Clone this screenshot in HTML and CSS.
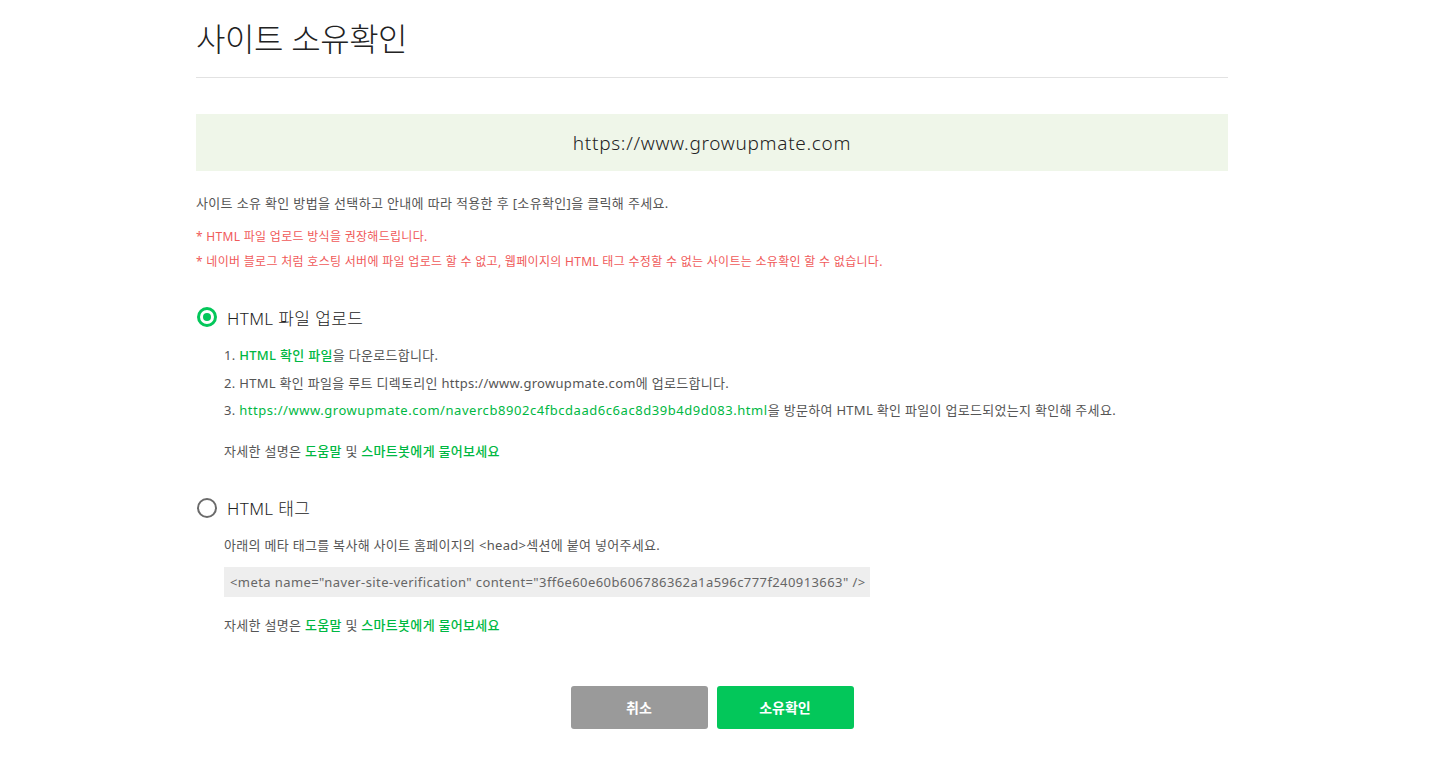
FILE: index.html
```html
<!DOCTYPE html>
<html lang="ko">
<head>
<meta charset="utf-8">
<title>사이트 소유확인</title>
<link rel="stylesheet" href="styles.css">
</head>
<body>
<div class="page">
  <h1 class="title">사이트 소유확인</h1>
  <div class="site-box">https://www.growupmate.com</div>
  <p class="desc">사이트 소유 확인 방법을 선택하고 안내에 따라 적용한 후 [소유확인]을 클릭해 주세요.</p>
  <p class="warn first">* HTML 파일 업로드 방식을 권장해드립니다.</p>
  <p class="warn">* 네이버 블로그 처럼 호스팅 서버에 파일 업로드 할 수 없고, 웹페이지의 HTML 태그 수정할 수 없는 사이트는 소유확인 할 수 없습니다.</p>

  <div class="option">
    <label class="radio-row">
      <span class="radio checked"></span>
      <span class="radio-label">HTML 파일 업로드</span>
    </label>
    <div class="option-body">
      <ol class="steps">
        <li>1. <a class="link strong">HTML 확인 파일</a>을 다운로드합니다.</li>
        <li>2. HTML 확인 파일을 루트 디렉토리인 https://www.growupmate.com에 업로드합니다.</li>
        <li>3. <a class="link url">https://www.growupmate.com/navercb8902c4fbcdaad6c6ac8d39b4d9d083.html</a>을 방문하여 HTML 확인 파일이 업로드되었는지 확인해 주세요.</li>
      </ol>
      <p class="help">자세한 설명은 <a class="link strong">도움말</a> 및 <a class="link strong">스마트봇에게 물어보세요</a></p>
    </div>
  </div>

  <div class="option second">
    <label class="radio-row">
      <span class="radio"></span>
      <span class="radio-label">HTML 태그</span>
    </label>
    <div class="option-body">
      <p class="meta-desc">아래의 메타 태그를 복사해 사이트 홈페이지의 &lt;head&gt;섹션에 붙여 넣어주세요.</p>
      <div class="code">&lt;meta name="naver-site-verification" content="3ff6e60e60b606786362a1a596c777f240913663" /&gt;</div>
      <p class="help">자세한 설명은 <a class="link strong">도움말</a> 및 <a class="link strong">스마트봇에게 물어보세요</a></p>
    </div>
  </div>

  <div class="buttons">
    <button class="btn cancel">취소</button>
    <button class="btn confirm">소유확인</button>
  </div>
</div>
</body>
</html>
```

FILE: styles.css
```css
* { box-sizing: border-box; }
html, body { margin: 0; padding: 0; background: #fff; }
body {
  font-family: "Noto Sans", "Noto Sans CJK KR", sans-serif;
  color: #333;
}
.page {
  width: 1032px;
  margin-left: 196px;
  padding-top: 14px;
}
.title {
  margin: 0;
  font-family: "Noto Sans CJK KR", sans-serif;
  font-size: 32px;
  font-weight: 300;
  letter-spacing: -0.5px;
  color: #222;
  line-height: 47px;
  padding-bottom: 16px;
  border-bottom: 1px solid #e2e2e2;
}
.site-box {
  margin-top: 36px;
  height: 57px;
  background: #eff6e9;
  display: flex;
  align-items: center;
  justify-content: center;
  font-size: 19px;
  font-weight: 300;
  letter-spacing: 0.7px;
  color: #222;
}
.desc {
  margin: 21px 0 0;
  font-size: 13px;
  letter-spacing: 0.35px;
  color: #555;
  line-height: 22px;
}
.warn {
  margin: 0;
  font-size: 12px;
  letter-spacing: 0.3px;
  color: #f05a5a;
  line-height: 25px;
}
.warn.first { margin-top: 10px; }
.option { margin-top: 31px; }
.option.second { margin-top: 34px; }
.radio-row {
  display: flex;
  align-items: center;
  gap: 10px;
  height: 24px;
}
.radio {
  width: 20px;
  height: 20px;
  border-radius: 50%;
  border: 2px solid #6b6b6b;
  display: inline-flex;
  align-items: center;
  justify-content: center;
  margin-left: 1px;
}
.radio.checked { border: 3px solid #03c75a; }
.radio.checked::after {
  content: "";
  width: 8px;
  height: 8px;
  border-radius: 50%;
  background: #03c75a;
}
.radio-label {
  font-size: 17px;
  font-weight: 300;
  letter-spacing: 0.4px;
  color: #222;
}
.option-body { padding-left: 28px; }
.steps {
  list-style: none;
  margin: 13px 0 0;
  padding: 0;
}
.steps li {
  font-size: 13px;
  letter-spacing: 0.3px;
  color: #555;
  line-height: 27.5px;
}
.link { color: #00b843; text-decoration: none; }
.link.strong { font-weight: 500; }
.link.url { letter-spacing: 0.55px; }
.help {
  margin: 15px 0 0;
  font-size: 13px;
  letter-spacing: 0.3px;
  color: #555;
  line-height: 22px;
}
.meta-desc {
  margin: 14px 0 0;
  font-size: 13px;
  letter-spacing: 0.3px;
  color: #555;
  line-height: 22px;
}
.code {
  margin-top: 11px;
  display: inline-block;
  background: #eeeeee;
  padding: 0 5px 0 6px;
  height: 30px;
  line-height: 30px;
  font-size: 13px;
  letter-spacing: 0.41px;
  color: #666;
}
.option.second .help { margin-top: 17px; }
.buttons {
  margin-top: 50px;
  display: flex;
  justify-content: center;
  gap: 9px;
  padding-left: 2px;
  padding-right: 2px;
}
.btn {
  width: 137px;
  height: 43px;
  border: 0;
  border-radius: 3px;
  font-family: "Noto Sans CJK KR", sans-serif;
  font-size: 14px;
  font-weight: 700;
  color: #fff;
  cursor: pointer;
}
.cancel { background: #9a9a9a; }
.confirm { background: #03c75a; }
```
